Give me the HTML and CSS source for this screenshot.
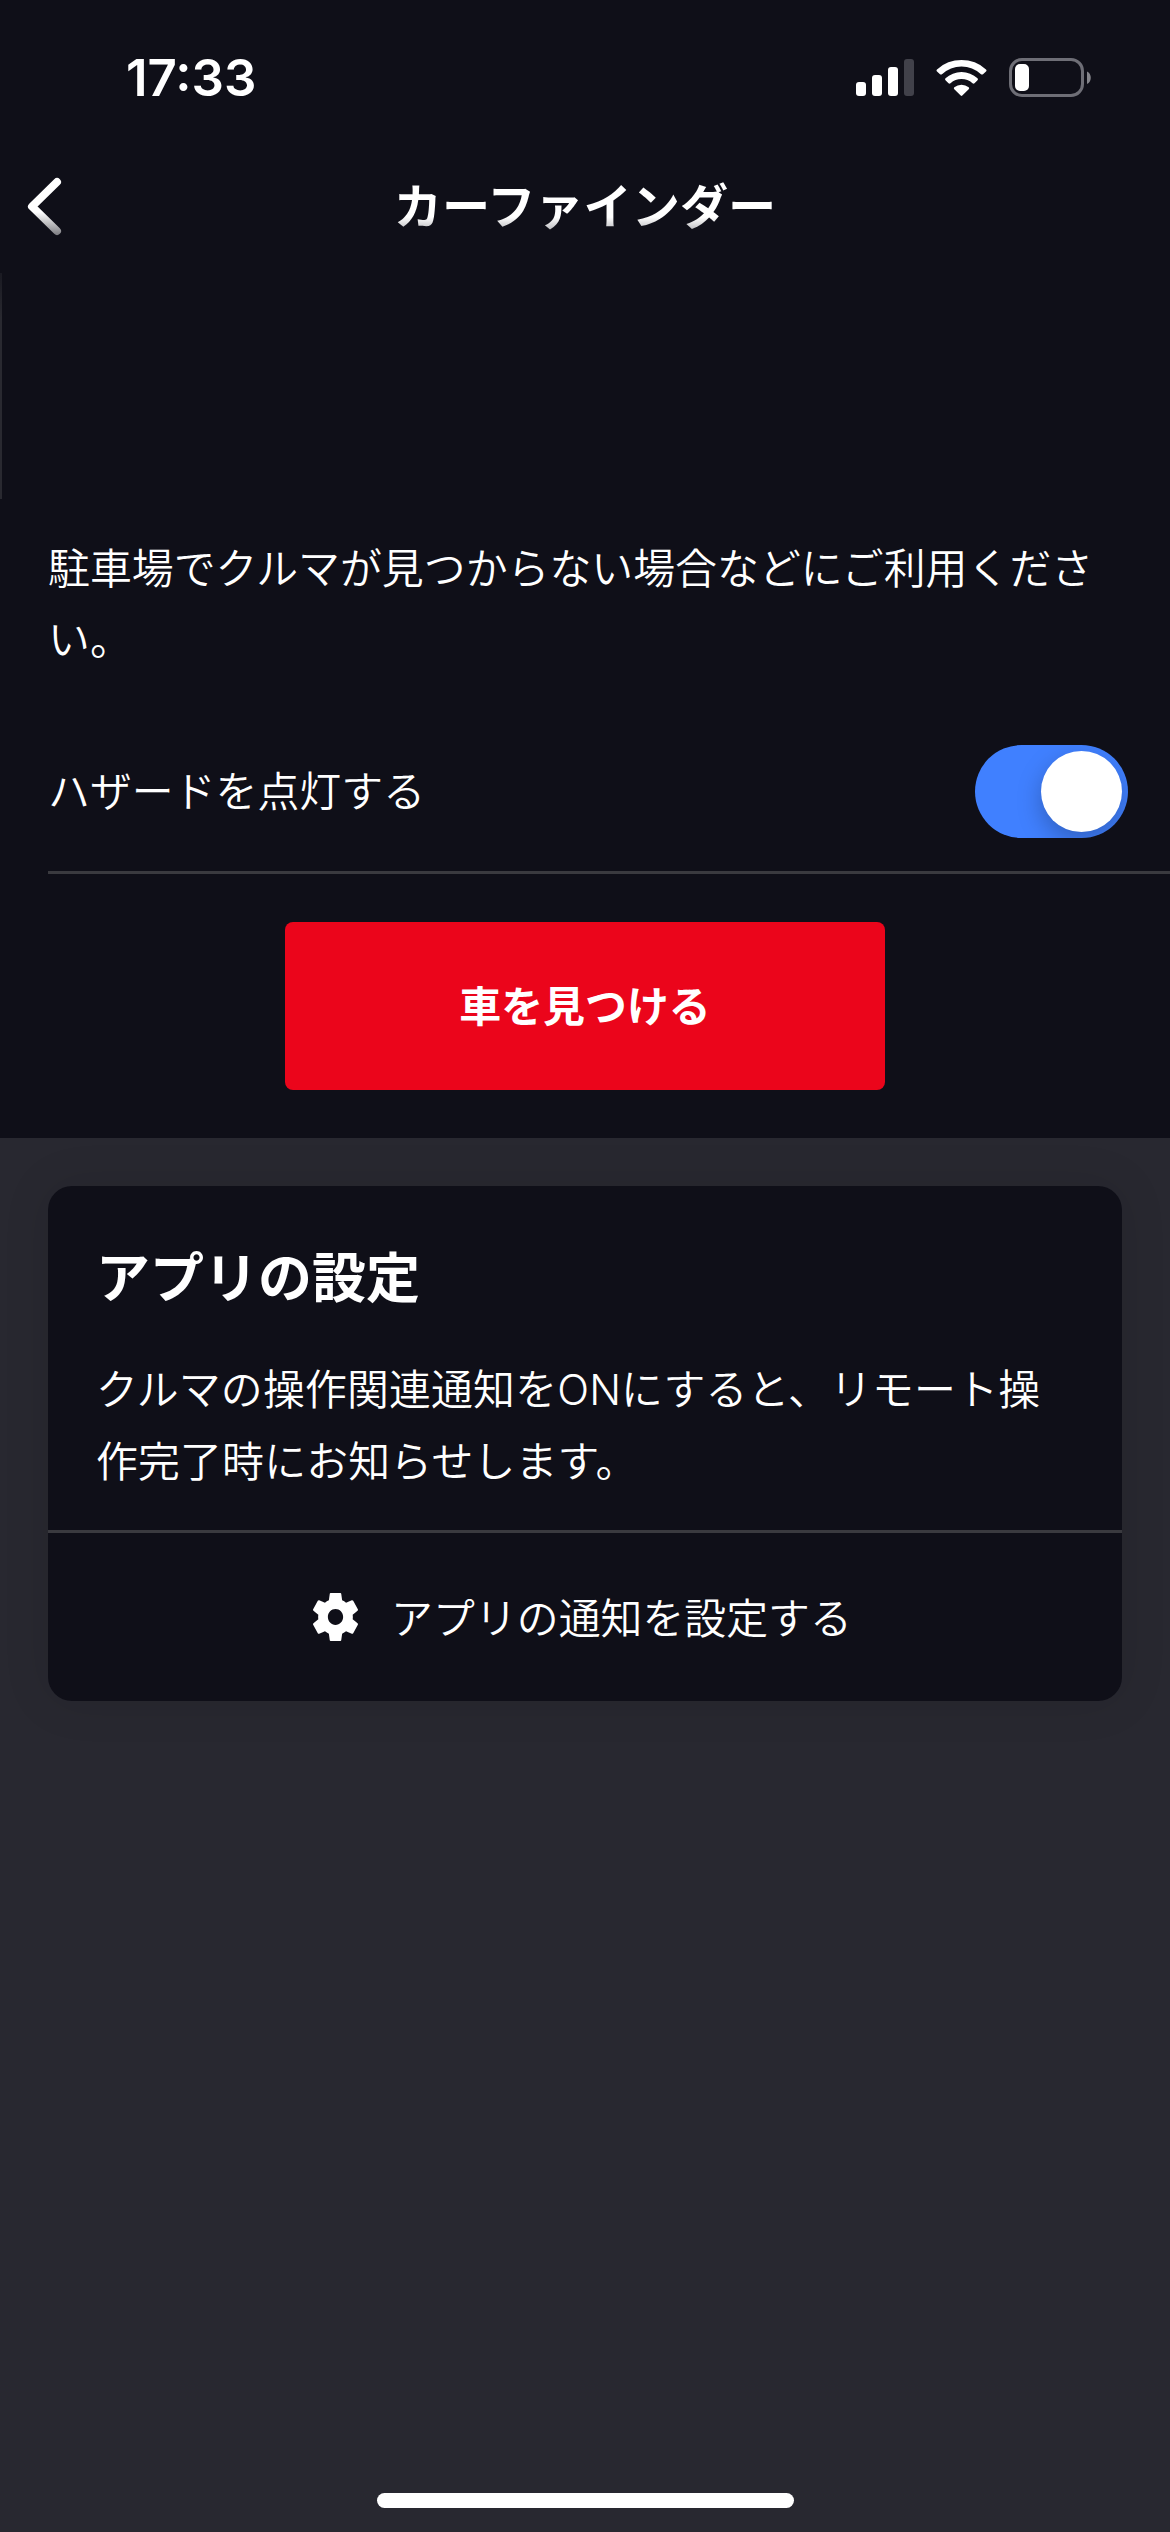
FILE: index.html
```
<!DOCTYPE html>
<html lang="ja">

<head>
    <meta charset="UTF-8">
    <meta name="viewport" content="width=device-width, initial-scale=1.0">

    <title>カーファインダー</title>

    <link rel="stylesheet" href="styles.css">
</head>

<body>
    <div class="screen">
        <div class="status-bar">
            <span class="time">17:33</span>
            <div class="status-icons">
                <svg class="signal" width="58" height="38" viewBox="0 0 58 38" fill="#fff">
                    <rect x="0" y="23" width="10" height="14" rx="3" />
                    <rect x="16" y="16" width="10" height="21" rx="3" />
                    <rect x="32" y="8" width="10" height="29" rx="3" />
                    <rect x="48" y="0" width="10" height="37" rx="3" fill="#41414a" />
                </svg>
                <svg class="wifi" width="52" height="38" viewBox="0 0 52 38" fill="#fff">
                    <path d="M1 10.5a36 36 0 0 1 49 0q1 1 0 2l-3 2.700q-1 .8-2 0a28.500 28.500 0 0 0-39 0q-1 .8-2 0l-3-2.700q-1-1 0-2z" />
                    <path d="M9.500 19.300a23.500 23.500 0 0 1 32 0q1 1 0 2l-3 3q-1 .8-2 0a16.500 16.500 0 0 0-22 0q-1 .8-2 0l-3-3q-1-1 0-2z" />
                    <path d="M18.300 28.200a11.500 11.500 0 0 1 14.400 0q1 .8 0 2l-6.400 6.400q-.8.800-1.600 0l-6.400-6.400q-1-1.200 0-2z" />
                </svg>
                <svg class="battery" width="83" height="40" viewBox="0 0 83 40">
                    <rect x="1.500" y="1.500" width="72" height="36" rx="11.500" fill="none" stroke="#6e6e76" stroke-width="3" />
                    <rect x="6" y="6" width="14" height="27" rx="5" fill="#fff" />
                    <path d="M78 13.500c5 2 5 10.500 0 12.500z" fill="#85858b" />
                </svg>
            </div>
        </div>

        <header class="nav">
            <svg class="back" width="40" height="64" viewBox="0 0 40 64">
                <defs>
                    <linearGradient id="fade" gradientUnits="userSpaceOnUse" x1="0" y1="38" x2="0" y2="62">
                        <stop offset="0" stop-color="#fff" />
                        <stop offset="1" stop-color="#77777c" />
                    </linearGradient>
                </defs>
                <path d="M33 8L8 32.500L33 57" fill="none" stroke="url(#fade)" stroke-width="8" stroke-linecap="round" stroke-linejoin="round" />
            </svg>
            <h1 class="nav-title">カーファインダー</h1>
        </header>

        <main>
            <section class="finder">
                <div class="map-edge"></div>
                <p class="lead">駐車場でクルマが見つからない場合などにご利用ください。</p>
                <div class="option">
                    <span class="option-label">ハザードを点灯する</span>
                    <div class="toggle"><div class="knob"></div></div>
                </div>
                <button class="find-btn">車を見つける</button>
            </section>

            <section class="card">
                <div class="card-body">
                    <h2 class="card-title">アプリの設定</h2>
                    <p class="card-text">クルマの操作関連通知をONにすると、リモート操作完了時にお知らせします。</p>
                </div>
                <div class="card-link">
                    <svg class="gear" width="45" height="48" viewBox="2.270 2 19.460 20" preserveAspectRatio="none" fill="#fff">
                        <path d="M19.430 12.980c.04-.32.070-.64.070-.98s-.03-.66-.07-.98l2.110-1.650c.19-.15.240-.42.120-.64l-2-3.460c-.12-.22-.39-.3-.61-.22l-2.490 1c-.52-.4-1.080-.73-1.690-.98l-.38-2.650C14.460 2.180 14.250 2 14 2h-4c-.25 0-.46.180-.49.420l-.38 2.650c-.61.250-1.170.590-1.690.980l-2.490-1c-.23-.09-.49 0-.61.220l-2 3.460c-.13.220-.07.490.120.640l2.110 1.650c-.04.320-.07.650-.07.980s.03.660.070.980l-2.110 1.650c-.19.150-.24.420-.12.640l2 3.460c.12.220.39.300.61.220l2.490-1c.52.400 1.080.730 1.690.980l.38 2.650c.03.240.24.420.49.420h4c.25 0 .46-.18.490-.42l.38-2.650c.61-.25 1.170-.59 1.690-.98l2.490 1c.23.090.49 0 .61-.22l2-3.460c.12-.22.070-.49-.12-.64l-2.110-1.650zM12 15.300c-1.820 0-3.300-1.480-3.300-3.300s1.480-3.300 3.300-3.300 3.300 1.480 3.300 3.300-1.480 3.300-3.300 3.300z" />
                    </svg>
                    <span class="card-link-text">アプリの通知を設定する</span>
                </div>
            </section>
        </main>

        <div class="home-indicator"></div>
    </div>
</body>

</html>
```
FILE: styles.css
```
* {
    box-sizing: border-box;
}

body {
    margin: 0;
    background: #282830;
    color: #fff;
    font-family: "Noto Sans CJK JP", sans-serif;
    font-size: 41.9px;
    font-weight: 350;
}

h1,
h2,
p {
    margin: 0;
}

svg {
    display: block;
}

.screen {
    display: flex;
    flex-direction: column;
    width: 1170px;
    height: 2532px;
}

/* status bar */
.status-bar {
    display: flex;
    justify-content: space-between;
    height: 142px;
    padding: 0 78px 0 126px;
    background: #0f0f18;
}

.time {
    margin-top: 47px;
    font-family: Inter, sans-serif;
    font-size: 51px;
    font-weight: 600;
    line-height: 62px;
}

.status-icons {
    display: flex;
    margin-top: 58px;
}

.signal,
.wifi {
    margin-top: 1px;
}

.wifi {
    margin-left: 22px;
}

.battery {
    margin-left: 21px;
}

/* navigation */
.nav {
    display: grid;
    grid-template-columns: 96px 1fr 96px;
    align-items: center;
    height: 131px;
    padding-bottom: 4px;
    background: #0f0f18;
}

.back {
    margin-left: 24px;
}

.nav-title {
    padding-bottom: 5px;
    font-size: 48.2px;
    font-weight: 700;
    line-height: 60px;
    text-align: center;
    background: linear-gradient(#fff 68%, #b4b4b8 90%);
    background-clip: text;
    -webkit-background-clip: text;
    color: transparent;
}

/* car finder */
.finder {
    display: flex;
    flex-direction: column;
    height: 865px;
    background: #0f0f18;
}

.map-edge {
    width: 2px;
    height: 226px;
    background: linear-gradient(#1a1a22, #292930 20%);
}

.lead {
    margin-top: 31px;
    padding: 0 48px;
    line-height: 71.4px;
}

.option {
    display: flex;
    align-items: center;
    justify-content: space-between;
    height: 165px;
    margin: 36px 0 0 48px;
    padding: 3px 42px 0 0;
    border-bottom: 3px solid #3a3a3f;
}

.option-label {
    padding-bottom: 5px;
}

.toggle {
    display: flex;
    justify-content: flex-end;
    width: 153px;
    height: 93px;
    padding: 6px;
    border-radius: 47px;
    background: #4080ff;
    overflow: hidden;
}

.knob {
    width: 81px;
    height: 81px;
    border-radius: 50%;
    background: #fff;
    box-shadow: 0 9px 24px rgba(0, 0, 0, .25);
}

.find-btn {
    width: 600px;
    height: 168px;
    margin: 48px auto 0;
    padding: 0 0 4px;
    border: none;
    border-radius: 8px;
    background: #eb051b;
    color: #fff;
    font-family: inherit;
    font-size: 41.9px;
    font-weight: 700;
}

/* settings card */
.card {
    margin: 48px 48px 0;
    border-radius: 24px;
    background: #0f0f18;
    box-shadow: 0 0 48px rgba(0, 0, 0, .1);
}

.card-body {
    height: 347px;
    padding: 46px 48px 0;
    border-bottom: 3px solid #3a3a3f;
}

.card-title {
    font-size: 54px;
    font-weight: 700;
    line-height: 86px;
}

.card-text {
    margin-top: 36px;
    padding-right: 6px;
    font-family: Inter, "Noto Sans CJK JP", sans-serif;
    letter-spacing: .15px;
    line-height: 72px;
}

.card-link {
    display: flex;
    align-items: center;
    justify-content: center;
    gap: 33px;
    height: 168px;
    padding-right: 5px;
}

.card-link-text {
    padding-bottom: 4px;
}

.home-indicator {
    width: 417px;
    height: 15px;
    margin: auto auto 24px;
    border-radius: 8px;
    background: #fff;
}
```
